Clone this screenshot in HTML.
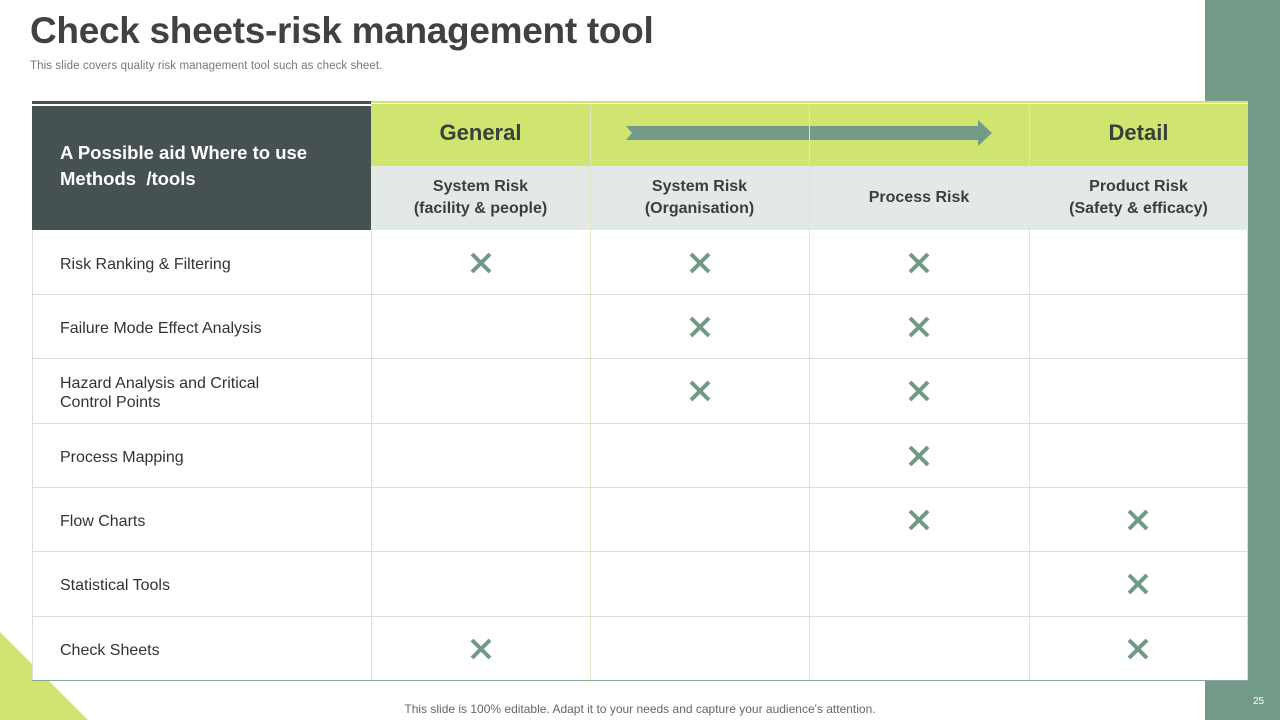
<!DOCTYPE html>
<html><head><meta charset="utf-8"><style>
*{margin:0;padding:0;box-sizing:border-box}
body{width:1280px;height:720px;position:relative;background:#fff;font-family:"Liberation Sans",sans-serif;overflow:hidden}
.a{position:absolute}
.title{left:30px;top:10px;font-size:37px;font-weight:bold;color:#3f4242;letter-spacing:-0.3px}
.sub{left:30px;top:60px;font-size:11.5px;color:#777;letter-spacing:0.1px}
.side{left:1205px;top:0;width:75px;height:720px;background:#739a88}
.hd{color:#3a3e3c;font-weight:bold;text-align:center;display:flex;align-items:center;justify-content:center}
.row{color:#333;font-size:16px;display:flex;align-items:center;left:60px}
.x{position:absolute;width:22px;height:22px}
.vl{position:absolute;width:1px;background:#dcdcdc}
.hl{position:absolute;height:1px;background:#dcdcdc;left:32px;width:1216px}
</style></head><body>
<div class="a side"></div>
<svg class="a" style="left:0;top:632px" width="90" height="88"><polygon points="0,0 88,88 0,88" fill="#cfe56f"/></svg>
<div class="a title">Check sheets-risk management tool</div>
<div class="a sub">This slide covers quality risk management tool such as check sheet.</div>

<div class="a" style="left:32px;top:101px;width:339px;height:3px;background:#465252"></div>
<div class="a" style="left:371px;top:101px;width:877px;height:5px;background:#cfe56f"></div>
<div class="a" style="left:371px;top:103px;width:877px;height:1px;background:#fff"></div>
<div class="a" style="left:32px;top:106px;width:339px;height:124px;background:#465252"></div>
<div class="a" style="left:60px;top:140px;color:#fff;font-weight:bold;font-size:18.5px;line-height:26px">A Possible aid Where to use<br>Methods &nbsp;/tools</div>
<div class="a" style="left:371px;top:106px;width:877px;height:60px;background:#cfe56f"></div>
<div class="a" style="left:371px;top:166px;width:877px;height:64px;background:#e3eae6"></div>
<div class="a" style="left:32px;top:230px;width:1216px;height:450px;background:#fff"></div>
<div class="a hd" style="left:371px;top:106px;width:219px;height:54px;font-size:22px">General</div>
<div class="a hd" style="left:1029px;top:106px;width:219px;height:54px;font-size:22px">Detail</div>
<svg class="a" style="left:620px;top:118px" width="380" height="30"><polygon points="6,8 358,8 358,2 372,15 358,28 358,22 6,22 12,15" fill="#739a88"/></svg>
<div class="a hd" style="left:371px;top:166px;width:219px;height:64px;font-size:16px;line-height:22px">System Risk<br>(facility &amp; people)</div>
<div class="a hd" style="left:590px;top:166px;width:219px;height:64px;font-size:16px;line-height:22px">System Risk<br>(Organisation)</div>
<div class="a hd" style="left:809px;top:166px;width:220px;height:64px;font-size:16px;line-height:22px">Process Risk</div>
<div class="a hd" style="left:1029px;top:166px;width:219px;height:64px;font-size:16px;line-height:22px">Product Risk<br>(Safety &amp; efficacy)</div>

<div class="vl" style="left:371px;top:230px;height:450px"></div>
<div class="vl" style="left:590px;top:106px;height:574px;background:#e0e6c8"></div>
<div class="vl" style="left:809px;top:106px;height:574px;background:#e0e6c8"></div>
<div class="vl" style="left:1029px;top:106px;height:574px;background:#e0e6c8"></div>
<div class="vl" style="left:32px;top:230px;height:450px"></div>
<div class="vl" style="left:1247px;top:230px;height:450px"></div>
<div class="hl" style="top:294px"></div>
<div class="hl" style="top:358px"></div>
<div class="hl" style="top:423px"></div>
<div class="hl" style="top:487px"></div>
<div class="hl" style="top:551px"></div>
<div class="hl" style="top:616px"></div>
<div class="hl" style="top:680px;background:#8aa89a"></div>

<div class="a row" style="top:232px;height:65px">Risk Ranking &amp; Filtering</div>
<div class="a row" style="top:297px;height:64px">Failure Mode Effect Analysis</div>
<div class="a row" style="top:360px;height:65px;line-height:19px">Hazard Analysis and Critical<br>Control Points</div>
<div class="a row" style="top:426px;height:64px">Process Mapping</div>
<div class="a row" style="top:490px;height:64px">Flow Charts</div>
<div class="a row" style="top:554px;height:64px">Statistical Tools</div>
<div class="a row" style="top:618px;height:65px">Check Sheets</div>

<svg width="0" height="0" style="position:absolute"><defs><g id="x"><path d="M2 2L20 20M20 2L2 20" stroke="#6f9a86" stroke-width="4"/></g></defs></svg>
<svg class="x" style="left:470px;top:252px"><use href="#x"/></svg>
<svg class="x" style="left:689px;top:252px"><use href="#x"/></svg>
<svg class="x" style="left:908px;top:252px"><use href="#x"/></svg>
<svg class="x" style="left:689px;top:316px"><use href="#x"/></svg>
<svg class="x" style="left:908px;top:316px"><use href="#x"/></svg>
<svg class="x" style="left:689px;top:380px"><use href="#x"/></svg>
<svg class="x" style="left:908px;top:380px"><use href="#x"/></svg>
<svg class="x" style="left:908px;top:445px"><use href="#x"/></svg>
<svg class="x" style="left:908px;top:509px"><use href="#x"/></svg>
<svg class="x" style="left:1127px;top:509px"><use href="#x"/></svg>
<svg class="x" style="left:1127px;top:573px"><use href="#x"/></svg>
<svg class="x" style="left:470px;top:638px"><use href="#x"/></svg>
<svg class="x" style="left:1127px;top:638px"><use href="#x"/></svg>

<div class="a" style="left:0;width:1280px;top:702px;text-align:center;font-size:12px;color:#666">This slide is 100% editable. Adapt it to your needs and capture your audience's attention.</div>
<div class="a" style="left:1253px;top:696px;font-size:10px;color:#fff">25</div>
</body></html>
